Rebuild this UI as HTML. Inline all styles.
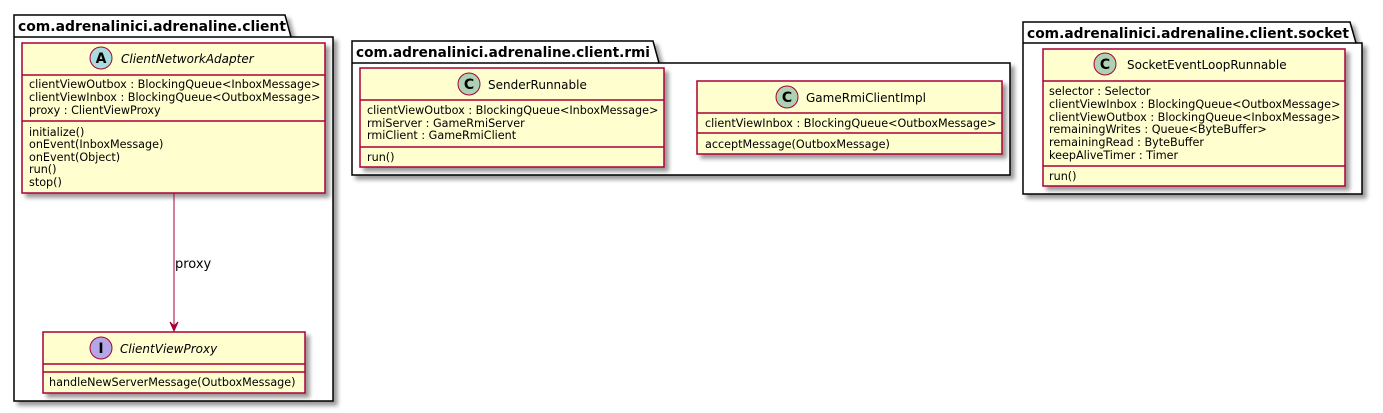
<!DOCTYPE html>
<html><head><meta charset="utf-8"><style>
html,body{margin:0;padding:0;background:#fff;}
svg{display:block;}
text{font-family:"DejaVu Sans","Liberation Sans",sans-serif;fill:#000;}
.m{font-size:11.2px;}
.n{font-size:12px;}
.p{font-size:14px;font-weight:bold;}
.box{fill:#FEFECE;stroke:#A80036;stroke-width:1.5;}
.sep{stroke:#A80036;stroke-width:1.5;}
.pk{fill:#fff;stroke:#000;stroke-width:1.5;}
</style></head><body>
<svg width="1383" height="413" viewBox="0 0 1383 413" xmlns="http://www.w3.org/2000/svg">
<defs>
<filter id="sh" x="-5%" y="-5%" width="115%" height="120%">
<feGaussianBlur in="SourceAlpha" stdDeviation="2"/>
<feOffset dx="4" dy="4" result="b"/>
<feComponentTransfer><feFuncA type="linear" slope="0.4"/></feComponentTransfer>
<feMerge><feMergeNode/><feMergeNode in="SourceGraphic"/></feMerge>
</filter>
</defs>

<!-- Package 1 -->
<g filter="url(#sh)">
<path class="pk" d="M14,15 L285,15 L291,37 L333,37 L333,401 L14,401 Z"/>
<line x1="14" y1="37" x2="291" y2="37" stroke="#000" stroke-width="1.5"/>
</g>
<text class="p" x="18" y="31" textLength="268" lengthAdjust="spacingAndGlyphs">com.adrenalinici.adrenaline.client</text>

<!-- Package 2 -->
<g filter="url(#sh)">
<path class="pk" d="M352,41 L653,41 L659,63 L1010,63 L1010,175 L352,175 Z"/>
<line x1="352" y1="63" x2="659" y2="63" stroke="#000" stroke-width="1.5"/>
</g>
<text class="p" x="356" y="57" textLength="294" lengthAdjust="spacingAndGlyphs">com.adrenalinici.adrenaline.client.rmi</text>

<!-- Package 3 -->
<g filter="url(#sh)">
<path class="pk" d="M1023,22 L1350,22 L1356,43 L1362,43 L1362,194 L1023,194 Z"/>
<line x1="1023" y1="43" x2="1356" y2="43" stroke="#000" stroke-width="1.5"/>
</g>
<text class="p" x="1027" y="38" textLength="322" lengthAdjust="spacingAndGlyphs">com.adrenalinici.adrenaline.client.socket</text>

<!-- ClientNetworkAdapter -->
<rect class="box" x="22" y="43" width="303" height="150" filter="url(#sh)"/>
<line class="sep" x1="22" y1="75" x2="325" y2="75"/>
<line class="sep" x1="22" y1="121" x2="325" y2="121"/>
<circle cx="101" cy="58" r="11" fill="#A9DCDF" stroke="#A80036" stroke-width="1"/>
<text x="101" y="63" text-anchor="middle" style="font-size:14px;font-weight:bold">A</text>
<text class="n" x="121" y="63" font-style="italic">ClientNetworkAdapter</text>
<text class="m" x="29" y="88">clientViewOutbox : BlockingQueue&lt;InboxMessage&gt;</text>
<text class="m" x="29" y="101">clientViewInbox : BlockingQueue&lt;OutboxMessage&gt;</text>
<text class="m" x="29" y="114">proxy : ClientViewProxy</text>
<text class="m" x="29" y="136">initialize()</text>
<text class="m" x="29" y="148">onEvent(InboxMessage)</text>
<text class="m" x="29" y="161">onEvent(Object)</text>
<text class="m" x="29" y="173">run()</text>
<text class="m" x="29" y="186">stop()</text>

<!-- Arrow -->
<line x1="174" y1="193" x2="174" y2="330" stroke="#A80036" stroke-width="1"/>
<path d="M170,322 L174,331 L178,322 L174,326 Z" fill="#A80036" stroke="#A80036"/>
<text x="175" y="268" style="font-size:13px">proxy</text>

<!-- ClientViewProxy -->
<rect class="box" x="43" y="332" width="262" height="61" filter="url(#sh)"/>
<line class="sep" x1="43" y1="364" x2="305" y2="364"/>
<line class="sep" x1="43" y1="372" x2="305" y2="372"/>
<circle cx="101" cy="348" r="11" fill="#B4A7E5" stroke="#A80036" stroke-width="1"/>
<text x="101" y="353" text-anchor="middle" style="font-size:14px;font-weight:bold">I</text>
<text class="n" x="120" y="353" font-style="italic">ClientViewProxy</text>
<text class="m" x="49" y="386">handleNewServerMessage(OutboxMessage)</text>

<!-- SenderRunnable -->
<rect class="box" x="360" y="68" width="304" height="99" filter="url(#sh)"/>
<line class="sep" x1="360" y1="100" x2="664" y2="100"/>
<line class="sep" x1="360" y1="147" x2="664" y2="147"/>
<circle cx="469" cy="84" r="11" fill="#ADD1B2" stroke="#A80036" stroke-width="1"/>
<text x="469" y="89" text-anchor="middle" style="font-size:14px;font-weight:bold">C</text>
<text class="n" x="488" y="89">SenderRunnable</text>
<text class="m" x="367" y="114">clientViewOutbox : BlockingQueue&lt;InboxMessage&gt;</text>
<text class="m" x="367" y="127">rmiServer : GameRmiServer</text>
<text class="m" x="367" y="139">rmiClient : GameRmiClient</text>
<text class="m" x="367" y="161">run()</text>

<!-- GameRmiClientImpl -->
<rect class="box" x="697" y="81" width="305" height="73" filter="url(#sh)"/>
<line class="sep" x1="697" y1="113" x2="1002" y2="113"/>
<line class="sep" x1="697" y1="133" x2="1002" y2="133"/>
<circle cx="787" cy="97" r="11" fill="#ADD1B2" stroke="#A80036" stroke-width="1"/>
<text x="787" y="102" text-anchor="middle" style="font-size:14px;font-weight:bold">C</text>
<text class="n" x="806" y="102">GameRmiClientImpl</text>
<text class="m" x="705" y="127">clientViewInbox : BlockingQueue&lt;OutboxMessage&gt;</text>
<text class="m" x="705" y="148">acceptMessage(OutboxMessage)</text>

<!-- SocketEventLoopRunnable -->
<rect class="box" x="1043" y="49" width="302" height="137" filter="url(#sh)"/>
<line class="sep" x1="1043" y1="81" x2="1345" y2="81"/>
<line class="sep" x1="1043" y1="166" x2="1345" y2="166"/>
<circle cx="1105" cy="64" r="11" fill="#ADD1B2" stroke="#A80036" stroke-width="1"/>
<text x="1105" y="69" text-anchor="middle" style="font-size:14px;font-weight:bold">C</text>
<text class="n" x="1127" y="69">SocketEventLoopRunnable</text>
<text class="m" x="1049" y="95">selector : Selector</text>
<text class="m" x="1049" y="108">clientViewInbox : BlockingQueue&lt;OutboxMessage&gt;</text>
<text class="m" x="1049" y="121">clientViewOutbox : BlockingQueue&lt;InboxMessage&gt;</text>
<text class="m" x="1049" y="133">remainingWrites : Queue&lt;ByteBuffer&gt;</text>
<text class="m" x="1049" y="146">remainingRead : ByteBuffer</text>
<text class="m" x="1049" y="159">keepAliveTimer : Timer</text>
<text class="m" x="1049" y="180">run()</text>
</svg>
</body></html>
